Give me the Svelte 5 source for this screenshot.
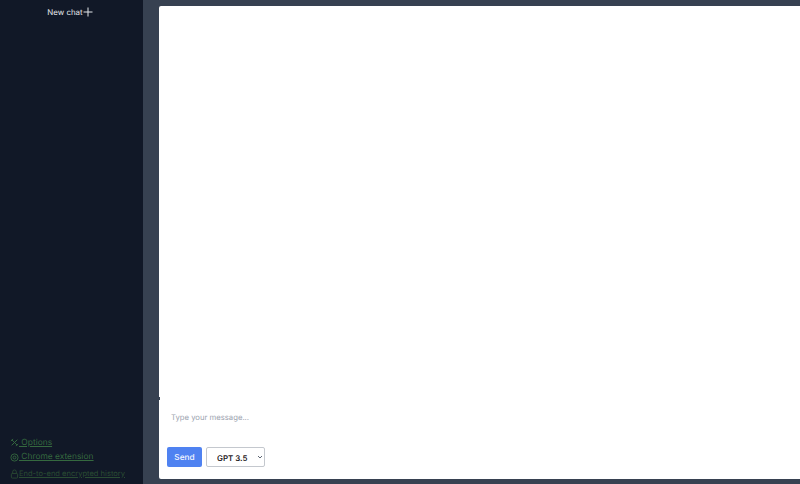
<script lang="ts">
	let message = $state('');
	let model = $state('GPT 3.5');
</script>

<div class="layout">
	<aside class="sidebar">
		<button class="new-chat">
			New chat
			<svg width="10" height="10" viewBox="0 0 10 10" fill="none" stroke="currentColor" stroke-width="1"><path d="M5 .5v9M.5 5h9" /></svg>
		</button>
		<div class="links">
			<a class="link" href="#options">
				<svg width="9" height="9" viewBox="0 0 10 10" fill="none" stroke="currentColor"><path d="M2 2l6 6M8 2L2 8M8 2L2 8M1 3.500l2.500-2.500M6.500 9L9 6.500" /></svg>
				<span>&nbsp;Options</span>
			</a>
			<a class="link" href="#extension">
				<svg width="9" height="9" viewBox="0 0 10 10" fill="none" stroke="currentColor"><circle cx="5" cy="5" r="4" /><circle cx="5" cy="5" r="1.6" /></svg>
				<span>&nbsp;Chrome extension</span>
			</a>
			<a class="link small" href="#history">
				<svg width="9" height="10" viewBox="0 0 10 11" fill="none" stroke="currentColor"><rect x="1.5" y="5" width="7" height="5" rx="1" /><path d="M3 5V3a2 2 0 0 1 4 0v2" /></svg>
				<span>End-to-end encrypted history</span>
			</a>
		</div>
	</aside>
	<main class="main">
		<div class="panel">
			<span class="tick"></span>
			<div class="messages"></div>
			<textarea class="input" placeholder="Type your message..." bind:value={message}></textarea>
			<div class="actions">
				<button class="send">Send</button>
				<div class="model-wrap">
					<select class="model" bind:value={model}>
						<option>GPT 3.5</option>
						<option>GPT 4</option>
					</select>
					<svg class="chevron" width="6" height="4" viewBox="0 0 6 4" fill="none" stroke="#4b5563" stroke-width="0.9"><path d="M1 1l2 2 2-2" /></svg>
				</div>
			</div>
		</div>
	</main>
</div>

<style>
	:global(body) { margin: 0; overflow: hidden; }

	.layout {
		display: flex; width: 800px; height: 484px;
		font-family: Inter, 'Liberation Sans', sans-serif;
		text-rendering: geometricPrecision;
	}

	.sidebar {
		width: 143px; flex: none; background: #111827;
		display: flex; flex-direction: column; justify-content: space-between;
	}
	.new-chat {
		display: flex; align-items: center; justify-content: center; gap: 0;
		background: none; border: none; color: #e5e7eb;
		font-family: inherit; font-size: 7.9px; text-rendering: inherit;
		padding: 6px 0 0; height: 18px; margin-left: -3px;
	}

	.links { display: flex; flex-direction: column; padding: 0 0 3px 10px; }
	.link {
		display: flex; align-items: center;
		color: #35693f; font-size: 8.4px; line-height: 14.5px;
		white-space: nowrap;
	}
	.link span { text-decoration: underline; }
	.link.small { color: #2a4c33; font-size: 7.55px; margin-top: 2px; }

	.main { flex: 1; min-width: 0; background: #374151; padding: 6px 0 5px 16px; }
	.panel {
		position: relative;
		height: 100%; background: #fff; border-radius: 2px 0 0 2px;
		display: flex; flex-direction: column;
	}
	.tick {
		position: absolute; left: -1px; top: 391px;
		width: 2px; height: 3px; background: #374151;
	}
	.messages { flex: 1; }

	.input {
		border: none; outline: none; resize: none; background: none;
		font-family: inherit; font-size: 7.7px; color: #111827; text-rendering: inherit;
		padding: 0 12px; height: 35px; line-height: 12px;
	}
	.input::placeholder { color: #9ca3af; }

	.actions { display: flex; align-items: center; gap: 4px; padding: 0 8px 12px; }
	.send {
		width: 35px; height: 20px; padding: 1px 0 0;
		background: #4f82f1; color: #f3f6ff; border: none; border-radius: 2px;
		font-family: inherit; font-size: 8.3px; font-weight: 500; text-rendering: inherit;
	}
	.model-wrap { position: relative; display: flex; }
	.model {
		appearance: none;
		width: 59px; height: 20px;
		background: #fff; color: #1f2024; border: 1px solid #c4c8ce; border-radius: 2px;
		font-family: inherit; font-size: 7.9px; font-weight: 600; text-rendering: inherit;
		padding: 1px 0 0 10px;
	}
	.chevron { position: absolute; right: 2px; top: 8px; pointer-events: none; }
</style>
